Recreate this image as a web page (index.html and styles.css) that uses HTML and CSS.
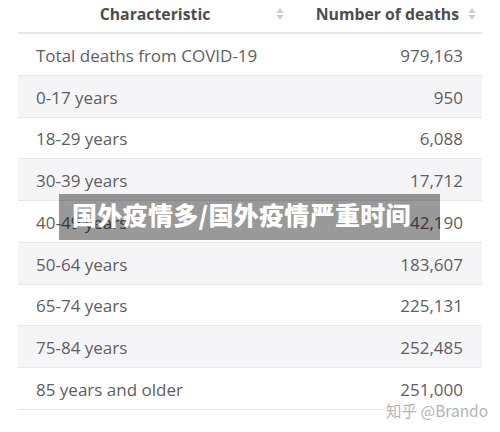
FILE: index.html
```html
<!DOCTYPE html>
<html>
<head>
<meta charset="utf-8">
<link rel="stylesheet" href="styles.css">
</head>
<body>
<div class="page">
  <table class="stats">
    <thead>
      <tr>
        <th class="col-name"><span class="h-text">Characteristic</span><span class="sort"></span></th>
        <th class="col-val"><span class="h-text">Number of deaths</span><span class="sort"></span></th>
      </tr>
    </thead>
    <tbody>
      <tr><td>Total deaths from COVID-19</td><td class="num">979,163</td></tr>
      <tr class="alt"><td>0-17 years</td><td class="num">950</td></tr>
      <tr><td>18-29 years</td><td class="num">6,088</td></tr>
      <tr class="alt"><td>30-39 years</td><td class="num">17,712</td></tr>
      <tr><td>40-49 years</td><td class="num">42,190</td></tr>
      <tr class="alt"><td>50-64 years</td><td class="num">183,607</td></tr>
      <tr><td>65-74 years</td><td class="num">225,131</td></tr>
      <tr class="alt"><td>75-84 years</td><td class="num">252,485</td></tr>
      <tr><td>85 years and older</td><td class="num">251,000</td></tr>
    </tbody>
  </table>
  <div class="banner">国外疫情多/国外疫情严重时间</div>
  <div class="mark">知乎 @Brando</div>
</div>
</body>
</html>
```
FILE: styles.css
```css
html, body {
  margin: 0;
  padding: 0;
  background: #fff;
}
.page {
  position: relative;
  width: 500px;
  height: 432px;
  overflow: hidden;
  font-family: "Open Sans", "Noto Sans", sans-serif;
  color: #5e5e5e;
}
.stats {
  margin-left: 18px;
  width: 464px;
  border-collapse: collapse;
  table-layout: fixed;
}
.stats th {
  height: 32px;
  padding: 0;
  font-size: 15.8px;
  font-weight: 700;
  color: #4d4d4d;
  border-bottom: 2px solid #e6e6e8;
  position: relative;
  vertical-align: top;
  line-height: 28px;
}
.col-name { width: 274px; }
.col-name .h-text { display: block; text-align: center; }
.col-val .h-text { display: block; text-align: right; padding-right: 23px; }
.sort {
  position: absolute;
  top: 8px;
  width: 8px;
  height: 12px;
}
.col-name .sort { right: 8px; }
.col-val .sort { right: 6px; }
.sort::before, .sort::after {
  content: "";
  position: absolute;
  left: 0;
  border-left: 4px solid transparent;
  border-right: 4px solid transparent;
}
.sort::before { top: 0; border-bottom: 5px solid #cfcfcf; }
.sort::after { bottom: 0; border-top: 5px solid #cfcfcf; }
.stats td {
  height: 37.75px;
  padding: 3px 0 0 18px;
  font-size: 17px;
  border-bottom: 1px solid #e8e8ec;
  white-space: nowrap;
  line-height: 20px;
}
.stats td.num {
  text-align: right;
  padding: 3px 19px 0 0;
}
.stats tr.alt td { background: #f5f5f8; }
.banner {
  position: absolute;
  left: 59px;
  top: 194px;
  width: 381px;
  height: 46px;
  box-sizing: border-box;
  padding-left: 13px;
  background: rgba(0, 0, 0, 0.4);
  color: #fff;
  font-family: "Noto Sans CJK SC", sans-serif;
  font-weight: 900;
  font-size: 25px;
  line-height: 41px;
  letter-spacing: 0.3px;
}
.mark {
  position: absolute;
  left: 384px;
  top: 402px;
  padding: 0 0 0 2px;
  background: #fff;
  color: #b4b4b4;
  font-family: "Noto Sans CJK SC", "Noto Sans", sans-serif;
  font-size: 15.5px;
  line-height: 17px;
}
```
